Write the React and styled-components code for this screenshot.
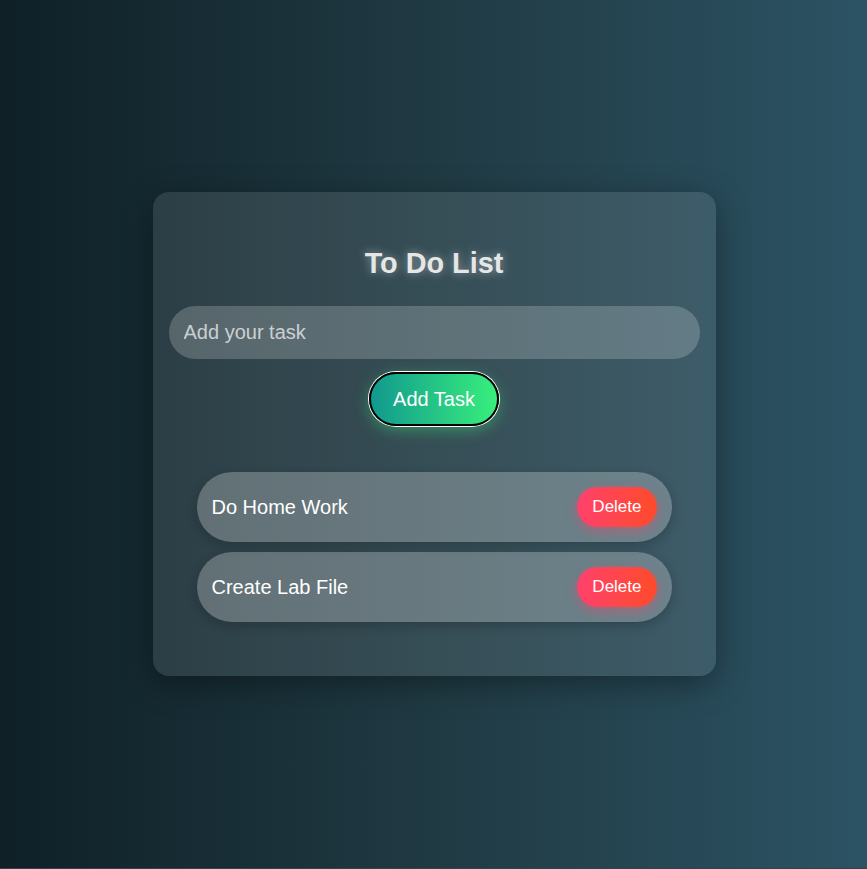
import React, { useState } from "react";
import styled, { createGlobalStyle } from "styled-components";

const GlobalStyle = createGlobalStyle`
  html {
    background: #3a3f4a;
  }
  body {
    margin: 0;
    font-family: "Liberation Sans", Arial, sans-serif;
  }
`;

export default function App() {
  const [tasks, setTasks] = useState(["Do Home Work", "Create Lab File"]);
  const [text, setText] = useState("");

  const addTask = () => {
    if (!text.trim()) return;
    setTasks([...tasks, text.trim()]);
    setText("");
  };

  return (
    <Page>
      <GlobalStyle />
      <Card>
        <Title>To Do List</Title>
        <TaskInput
          placeholder="Add your task"
          value={text}
          onChange={(e) => setText(e.target.value)}
        />
        <AddButton onClick={addTask}>Add Task</AddButton>
        <List>
          {tasks.map((t, i) => (
            <Item key={i}>
              <span>{t}</span>
              <DeleteButton
                onClick={() => setTasks(tasks.filter((_, j) => j !== i))}
              >
                Delete
              </DeleteButton>
            </Item>
          ))}
        </List>
      </Card>
    </Page>
  );
}

const Page = styled.div`
  height: 868px;
  padding-left: 1px;
  display: flex;
  align-items: center;
  justify-content: center;
  background: linear-gradient(to right, #0f2027, #203a43, #2c5364);
`;

const Card = styled.div`
  width: 563px;
  box-sizing: border-box;
  padding: 55px 16px 54px;
  display: flex;
  flex-direction: column;
  align-items: center;
  border-radius: 16px;
  background: rgba(255, 255, 255, 0.1);
  box-shadow: 0 8px 32px rgba(0, 0, 0, 0.37);
`;

const Title = styled.h2`
  margin: 0 0 26px;
  font-size: 28.8px;
  line-height: 33px;
  font-weight: bold;
  color: #e6e6e6;
  text-shadow: 0 0 10px rgba(255, 255, 255, 0.45);
`;

const TaskInput = styled.input`
  width: 100%;
  height: 53px;
  box-sizing: border-box;
  padding: 0 15px;
  border: none;
  outline: none;
  border-radius: 27px;
  background: rgba(255, 255, 255, 0.2);
  color: #fff;
  font-family: inherit;
  font-size: 20px;
  &::placeholder {
    color: rgba(255, 255, 255, 0.7);
  }
`;

const AddButton = styled.button`
  margin-top: 13px;
  padding: 13px 22px;
  border: 2px solid #000;
  border-radius: 28px;
  background: linear-gradient(to right, #11998e, #38ef7d);
  color: #fff;
  font-family: inherit;
  font-size: 20px;
  line-height: 24px;
  cursor: pointer;
  box-shadow: 0 0 0 1px #fff, 0 4px 15px rgba(56, 239, 125, 0.4);
`;

const List = styled.ul`
  list-style: none;
  margin: 46px 0 0;
  padding: 0;
  width: 475px;
  display: flex;
  flex-direction: column;
  gap: 10px;
`;

const Item = styled.li`
  display: flex;
  align-items: center;
  justify-content: space-between;
  height: 70px;
  box-sizing: border-box;
  padding: 0 15px;
  border-radius: 35px;
  background: rgba(255, 255, 255, 0.25);
  box-shadow: 0 4px 12px rgba(0, 0, 0, 0.2);
  color: #fff;
  font-size: 20px;
`;

const DeleteButton = styled.button`
  height: 40px;
  padding: 0 15px;
  border: none;
  border-radius: 20px;
  background: linear-gradient(to right, #ff416c, #ff4b2b);
  color: #fff;
  font-family: inherit;
  font-size: 17px;
  cursor: pointer;
  box-shadow: 0 4px 12px rgba(255, 65, 108, 0.4);
`;
